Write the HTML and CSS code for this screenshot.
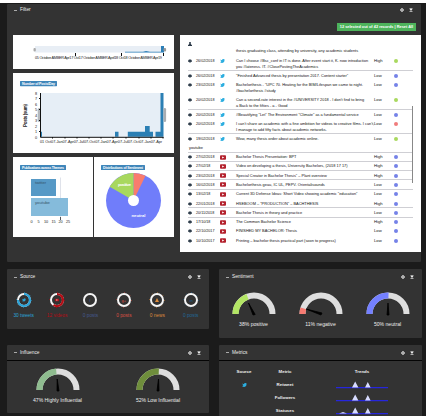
FILE: index.html
```
<!DOCTYPE html>
<html lang="en">
<head>
  <meta charset="UTF-8" />
  <title>Dashboard</title>
  <link rel="stylesheet" href="styles.css">
</head>
<body>
  <svg class="defs" width="0" height="0">
    <symbol id="user" viewBox="0 0 10 8"><path d="M2 0h6v2l2 1v3H7v2H3V6H0V3l2-1z"/></symbol>
    <symbol id="person" viewBox="0 0 10 10"><path d="M3 0h4v5l3 3v2H0V8l3-3z"/></symbol>
    <symbol id="twitter" viewBox="0 0 12 10"><path d="M0 1l5 2c0-4 4-4 5-2h2l-1 2c0 8-8 8-11 5l3-1-2-2 1-1z"/></symbol>
    <symbol id="youtube" viewBox="0 0 14 10"><rect width="14" height="10" rx="2"/><path fill="#fff" d="M5 2.5v5L10 5z"/></symbol>
    <symbol id="gear" viewBox="0 0 10 10"><circle cx="5" cy="5" r="3" fill="none" stroke="currentColor" stroke-width="2.5"/><path stroke="currentColor" stroke-width="1.5" d="M5 0v2M5 8v2M0 5h2M8 5h2"/></symbol>
    <symbol id="close" viewBox="0 0 10 10"><path stroke="currentColor" stroke-width="3" d="M2 1l6 8M8 1L2 9"/></symbol>
  </svg>

  <main class="page">
    <section class="panel filter">
      <header class="panel-head"><h2><i></i>Filter</h2><span class="tools"><svg><use href="#gear"/></svg><svg><use href="#close"/></svg></span></header>
      <div class="status"><span>12 selected out of 42 records | Reset All</span></div>
      <div class="filter-body">
        <div class="charts">
          <div class="card range">
            <svg viewBox="13 35 161 34">
              <rect x="35" y="46" width="128" height="6.5" fill="#e8eef5"/>
              <path fill="#2b7fb8" d="M125 52.5v-.7h18l3-.8 4 .8h11V46h3v6.5z"/>
              <rect x="33.5" y="48" width="2.3" height="3.5" rx="1" fill="#aaa"/>
              <rect x="163.5" y="48" width="2.6" height="3.5" rx="1" fill="#999"/>
              <path stroke="#111" d="M75.5 53v3M121.5 53v3M163.5 53v3"/>
              <text x="35" y="59.2" textLength="127">05 October AMBER Apr17 Oct17 October AMBER April18 Oct18 October AMBER Apr19</text>
            </svg>
          </div>
          <div class="card histogram">
            <svg viewBox="13 73 161 80">
              <rect x="20" y="81" width="37" height="5.2" rx=".6" fill="#3f86ba"/>
              <text class="badge" x="22" y="85.2" textLength="33">Number of Posts/Day</text>
              <rect x="40.5" y="93" width="122" height="44" fill="#e6eef6"/>
              <path fill="#2b7fb4" d="M40 131.8h2v5h-2zM115 131.8h3.5v5H115zM127.8 131.8H145V126h4.7v5.8h3.3v5h-25.2zM155.5 131.8h5V93h3v43.8h-8z"/>
              <rect x="37.7" y="108" width="3" height="14" rx="1.5" fill="#b5b8bc"/>
              <rect x="163.5" y="108" width="2.6" height="14" rx="1.3" fill="#aaadb1"/>
              <path fill="none" stroke="#111" d="M40.5 93v44.3H163.5M52.5 137v1.5M65 137v1.5M77 137v1.5M89 137v1.5M101 137v1.5M113 137v1.5M126 137v1.5M139 137v1.5M151 137v1.5M163 137v1.5M39 98.5h1.5M39 109.5h1.5M39 120.5h1.5M39 131.5h1.5"/>
              <text x="35" y="94.6">8</text><text x="35" y="100">7</text><text x="35" y="105.6">6</text><text x="35" y="111">5</text><text x="35" y="116.6">4</text><text x="35" y="122">3</text><text x="35" y="127.6">2</text><text x="35" y="133">1</text><text x="35" y="138.5">0</text>
              <text class="ylabel" transform="translate(26.5 127) rotate(-90)" textLength="23">Posts (sum)</text>
              <text x="40" y="142.8" textLength="122">01 Oct07-Jan07-Apr07-Jul07-Oct07-Jan07-Apr07-Jul07-Oct07-Jan07-Apr</text>
            </svg>
          </div>
          <div class="pair">
            <div class="card">
              <svg viewBox="13 157 80 80">
                <rect x="20" y="165" width="46" height="5" rx=".6" fill="#3f86ba"/>
                <text class="badge" x="22" y="169" textLength="42">Publications across Themes</text>
                <path stroke="#dfe2ea" d="M60.5 177.5v40"/>
                <rect x="31" y="179" width="25" height="17" fill="#5699c6"/>
                <rect x="31" y="198" width="37" height="18" fill="#85bbdb"/>
                <text class="bar-label" x="35" y="184">twitter</text>
                <text class="bar-label" x="35" y="203.5">youtube</text>
                <path stroke="#111" stroke-width=".7" d="M60.5 217v3"/>
                <g text-anchor="middle"><text x="31.5" y="223">0</text><text x="38.5" y="223">5</text><text x="46" y="223">10</text><text x="53.5" y="223">15</text><text x="60.5" y="223">20</text><text x="68" y="223">25</text></g>
              </svg>
            </div>
            <div class="card">
              <svg viewBox="94 157 80 80">
                <rect x="101" y="165" width="44" height="5" rx=".6" fill="#3f86ba"/>
                <text class="badge" x="103" y="169" textLength="40">Distributions of Sentiment</text>
                <circle cx="133.5" cy="200.5" r="27.5" fill="#707dfa"/>
                <path fill="#f97c6e" d="M133.5 200.5V173a27.5 27.5 0 0 1 12 2.75z"/>
                <path fill="#a8d85e" d="M133.5 200.5L109.7 186.7A27.5 27.5 0 0 1 133.5 173z"/>
                <circle cx="133.5" cy="200.5" r="5.5" fill="#fff"/>
                <text class="slice" x="118" y="186.3" textLength="13">positive</text>
                <text class="slice" x="131.5" y="217">neutral</text>
              </svg>
            </div>
          </div>
        </div>

        <div class="records">
          <svg class="icon"><use href="#person"/></svg>
          <div class="lead">thesis graduating class, attending by university, any academic students</div>
          <div class="row tall line"><svg class="icon"><use href="#user"/></svg><time>26/02/2018</time><svg class="tw"><use href="#twitter"/></svg><p>Can I choose #Bsc_conf in IT is done. After event start it, K. now introduction<br>you #lateness. IT. #ClosePostingTheAcademics</p><b>High</b><em class="pos"></em></div>
          <div class="row"><svg class="icon"><use href="#user"/></svg><time>26/02/2018</time><svg class="tw"><use href="#twitter"/></svg><p>"Finished Advanced thesis by presentation 2017. Content starter"</p><b>Low</b><em></em></div>
          <div class="row tall"><svg class="icon"><use href="#user"/></svg><time>23/02/2018</time><svg class="tw"><use href="#twitter"/></svg><p>Bachelorthesis - "UPC 70. Heating for the BIM/Lifespan we came to night.<br>#bachelorthesis  #study</p><b>Low</b><em></em></div>
          <div class="row tall line"><svg class="icon"><use href="#user"/></svg><time>20/02/2018</time><svg class="tw"><use href="#twitter"/></svg><p>Can a second-rate interest in the #UNIVERSITY 2018 - I don't find to bring<br>a Back to the fifties - a - Good</p><b>Low</b><em class="pos"></em></div>
          <div class="row"><svg class="icon"><use href="#user"/></svg><time>20/02/2018</time><svg class="tw"><use href="#twitter"/></svg><p>#Beautifying "Let" The Environment "Climate" as a fundamental service</p><b>Low</b><em></em></div>
          <div class="row tall line"><svg class="icon"><use href="#user"/></svg><time>20/02/2018</time><svg class="tw"><use href="#twitter"/></svg><p>I can't share an academic with a fine ambition for videos to creative films. I can't,<br>I manage to add fifty facts about academic networks.</p><b>Low</b><em class="neg"></em></div>
          <div class="row"><svg class="icon"><use href="#user"/></svg><time>19/02/2018</time><svg class="tw"><use href="#twitter"/></svg><p>Wow, many thesis order about academic online.</p><b>Low</b><em class="pos"></em></div>
          <div class="group">youtube</div>
          <div class="row line"><svg class="icon"><use href="#user"/></svg><time>27/02/2018</time><svg class="yt"><use href="#youtube"/></svg><p>Bachelor Thesis Presentation: BPT</p><b>High</b><em></em></div>
          <div class="row line"><svg class="icon"><use href="#user"/></svg><time>27/02/18</time><svg class="yt"><use href="#youtube"/></svg><p>Video on developing a thesis, University Bachelors, (2018 17 17)</p><b>High</b><em></em></div>
          <div class="row line"><svg class="icon"><use href="#user"/></svg><time>23/02/2018</time><svg class="yt"><use href="#youtube"/></svg><p>Special Creator in Bachelor Thesis" – Plant overview</p><b>High</b><em></em></div>
          <div class="row line"><svg class="icon"><use href="#user"/></svg><time>16/02/2018</time><svg class="yt"><use href="#youtube"/></svg><p>Bachelorthesis geau, IC UL, PEPV. Orientalisounds</p><b>Low</b><em></em></div>
          <div class="row"><svg class="icon"><use href="#user"/></svg><time>13/02/18</time><svg class="yt"><use href="#youtube"/></svg><p>Current 3D Defense Ideas: Short Video showing academic "education"</p><b>Low</b><em></em></div>
          <div class="row line"><svg class="icon"><use href="#user"/></svg><time>22/01/2018</time><svg class="yt"><use href="#youtube"/></svg><p>HSEBOOM – "PRODUCTION" – BACHTHESIS</p><b>High</b><em></em></div>
          <div class="row line"><svg class="icon"><use href="#user"/></svg><time>20/11/2018</time><svg class="yt"><use href="#youtube"/></svg><p>Bachelor Thesis in theory and practice</p><b>Low</b><em></em></div>
          <div class="row"><svg class="icon"><use href="#user"/></svg><time>17/10/18</time><svg class="yt"><use href="#youtube"/></svg><p>The Common Bachelor Science</p><b>High</b><em></em></div>
          <div class="row"><svg class="icon"><use href="#user"/></svg><time>22/10/2017</time><svg class="yt"><use href="#youtube"/></svg><p>FINISHED MY BACHELOR: Thesis</p><b>Low</b><em></em></div>
          <div class="row"><svg class="icon"><use href="#user"/></svg><time>10/10/2017</time><svg class="yt"><use href="#youtube"/></svg><p>Printing – bachelor thesis practical part (soon to progress)</p><b>Low</b><em></em></div>
          <span class="scrollbar"></span>
        </div>
      </div>
    </section>

    <section class="panel sources">
      <header class="panel-head"><h2><i></i>Source</h2><span class="tools"><svg><use href="#gear"/></svg><svg><use href="#close"/></svg></span></header>
      <div class="rings">
        <div class="ring tweets"><svg viewBox="-8 -8 16 16"><circle class="track" r="6"/><path class="arc" d="M0-6A6 6 0 1 1-6 0"/><circle class="ticks" r="7.5"/><use href="#twitter" x="-2" y="-1.7" width="4" height="3.4"/></svg>30 tweets</div>
        <div class="ring videos"><svg viewBox="-8 -8 16 16"><circle class="track" r="6"/><path class="arc" d="M0-6A6 6 0 1 1-3.5 4.9"/><circle class="ticks" r="7.5"/><use href="#youtube" x="-2" y="-1.5" width="4" height="3"/></svg>12 videos</div>
        <div class="ring facebook"><svg viewBox="-8 -8 16 16"><circle class="track" r="6"/><text x="-.8" y="1.5">f</text></svg>0 posts</div>
        <div class="ring google"><svg viewBox="-8 -8 16 16"><circle class="track" r="6"/><circle class="ticks" r="7.5"/><text x="-2.5" y="1.5">g+</text></svg>0 posts</div>
        <div class="ring rss"><svg viewBox="-8 -8 16 16"><circle class="track" r="6"/><circle class="ticks" r="7.5"/><path d="M-2 2l2-4 2 4z"/></svg>0 news</div>
        <div class="ring linkedin"><svg viewBox="-8 -8 16 16"><circle class="track" r="6"/><circle class="ticks" r="7.5"/><text x="-1.5" y="1.5">in</text></svg>0 posts</div>
      </div>
    </section>

    <section class="panel sentiments">
      <header class="panel-head"><h2><i></i>Sentiment</h2><span class="tools"><svg><use href="#gear"/></svg><svg><use href="#close"/></svg></span></header>
      <div class="gauges three">
        <div class="gauge"><svg viewBox="-22 -22 44 24"><path class="rest" d="M-18.5 0A18.5 18.5 0 0 1 18.5 0"/><path stroke="#b3e565" d="M-18.5 0A18.5 18.5 0 0 1-6.5-17.3"/><path class="needle" d="M-1 1L-5.5-11 1.2 .5z"/></svg>38% positive</div>
        <div class="gauge"><svg viewBox="-22 -22 44 24"><path class="rest" d="M-18.5 0A18.5 18.5 0 0 1 18.5 0"/><path stroke="#f77b72" d="M-18.5 0A18.5 18.5 0 0 1-17.6-5.7"/><path class="needle" d="M0 1L-15-5 1-1z"/></svg>11% negative</div>
        <div class="gauge"><svg viewBox="-22 -22 44 24"><path class="rest" d="M-18.5 0A18.5 18.5 0 0 1 18.5 0"/><path stroke="#7480ff" d="M-18.5 0A18.5 18.5 0 0 1 .5-18.5"/><path class="needle" d="M-1 1L0-11 1 1z"/></svg>50% neutral</div>
      </div>
    </section>

    <section class="panel influence">
      <header class="panel-head ruled"><h2><i></i>Influence</h2><span class="tools"><svg><use href="#gear"/></svg><svg><use href="#close"/></svg></span></header>
      <div class="gauges two">
        <div class="gauge"><svg viewBox="-22 -22 44 24"><path class="rest" d="M-18.5 0A18.5 18.5 0 0 1 18.5 0"/><path stroke="#8fbc8f" d="M-18.5 0A18.5 18.5 0 0 1-1.7-18.4"/><path class="needle" d="M-1 1L-.8-11 1 1z"/></svg>47% Highly Influential</div>
        <div class="gauge"><svg viewBox="-22 -22 44 24"><path class="rest" d="M-18.5 0A18.5 18.5 0 0 1 18.5 0"/><path stroke="#6f8e3c" d="M-18.5 0A18.5 18.5 0 0 1 .8-18.5"/><path class="needle" d="M-1 1L.5-11 1 1z"/></svg>52% Low Influential</div>
      </div>
    </section>

    <section class="panel metrics">
      <header class="panel-head ruled"><h2><i></i>Metrics</h2><span class="tools"><svg><use href="#gear"/></svg><svg><use href="#close"/></svg></span></header>
      <div class="metric-grid">
        <span>Source</span><span>Metric</span><span>Trends</span>
        <svg class="tw"><use href="#twitter"/></svg><span>Retweet</span>
        <svg class="spark" viewBox="0 0 52 9"><path class="base" d="M0 7h52v1.2H0z"/><path class="peak" d="M16 7.5l3.2-6 3.2 6zM29 7.5l2.8-5.5 2.8 5.5z"/></svg>
        <span></span><span>Followers</span>
        <svg class="spark" viewBox="0 0 52 9"><path class="base" d="M0 7h52v1.2H0z"/><path class="peak" d="M16 7.5l3.2-6 3.2 6zM29 7.5l2.8-5.5 2.8 5.5z"/></svg>
        <span></span><span>Statuses</span>
        <svg class="spark" viewBox="0 0 52 9"><path class="base" d="M0 7h52v1.2H0z"/><path class="peak" d="M3 7.5l4-1.5 4 1.5zM16 7.5l3.2-6 3.2 6zM29 7.5l2.8-5.5 2.8 5.5z"/></svg>
      </div>
    </section>
  </main>
</body>
</html>
```
FILE: styles.css
```
:root {
  --page: #1b1b1b;
  --panel: #333;
  --twitter: #2caee0;
}

* {
  box-sizing: border-box;
  margin: 0;
  padding: 0;
}

body {
  width: 427px;
  height: 416px;
  overflow: hidden;
  background: #fff;
  font: 5px/6px "Liberation Sans", Arial, sans-serif;
}

svg {
  display: block;
}

.defs {
  float: left;
}

.page {
  display: grid;
  grid-template-columns: 202px 203px;
  grid-template-rows: 258px 69px 80px;
  column-gap: 10px;
  row-gap: 7px;
  width: 426px;
  height: 413px;
  margin-top: 3px;
  padding: 1px 4px 0 7px;
  overflow: hidden;
  background: var(--page);
}

.panel {
  background: var(--panel);
  color: #eee;
  overflow: hidden;
  border-radius: 1px;
}

.filter {
  grid-column: 1 / 3;
  width: 414px;
}

.sources {
  height: 60px;
}

.influence {
  height: 68px;
}

.panel-head {
  display: flex;
  justify-content: space-between;
  align-items: center;
  height: 16px;
  padding: 0 8px 0 7px;
}

.filter .panel-head {
  height: 12px;
}

.ruled {
  border-bottom: 1px solid #050505;
}

.panel-head h2 {
  display: flex;
  align-items: center;
  gap: 3px;
  font-size: 4.8px;
  line-height: 6px;
  font-weight: normal;
}

.panel-head i {
  width: 3px;
  height: 1px;
  background: #aaa;
}

.tools {
  display: flex;
  gap: 5px;
  color: #eee;
}

.tools svg {
  width: 4px;
  height: 4px;
}

.status {
  display: flex;
  justify-content: flex-end;
  height: 19px;
  padding: 7px 5px 0 0;
}

.status span {
  width: 79px;
  height: 8px;
  background: #4db35b;
  color: #fff;
  font-size: 3.9px;
  line-height: 8px;
  font-weight: bold;
  text-align: center;
  white-space: nowrap;
}

.filter-body {
  display: flex;
  gap: 6px;
  padding-left: 6px;
}

.charts {
  display: flex;
  flex-direction: column;
  gap: 4px;
  width: 161px;
}

.card {
  background: #fff;
}

.card svg {
  width: 100%;
  height: 100%;
}

.range {
  height: 34px;
}

.histogram {
  height: 80px;
}

.pair {
  display: flex;
  gap: 1px;
}

.pair .card {
  width: 80px;
  height: 80px;
}

.card text {
  font-size: 3.8px;
  fill: #222;
}

.card .badge {
  font-size: 3.6px;
  font-weight: bold;
  fill: #fff;
}

.card .ylabel {
  font-size: 4.5px;
  font-weight: bold;
}

.card .bar-label {
  fill: #35536a;
  font-size: 4.2px;
}

.card .slice {
  font-size: 4.2px;
  font-weight: bold;
  fill: #fff;
}

.records {
  position: relative;
  width: 241px;
  height: 217px;
  padding: 7px 8px 0;
  background: #fff;
  color: #111;
  font-size: 3.9px;
  overflow: hidden;
}

.icon {
  width: 4px;
  height: 4px;
  fill: #2c3a48;
}

.lead {
  height: 10.5px;
  padding: 2px 0 0 48px;
  white-space: nowrap;
}

.row {
  display: grid;
  grid-template-columns: 8px 24px 16px 138px 20px 6px;
  height: 9.3px;
  padding-top: 1.5px;
  white-space: nowrap;
}

.tall {
  height: 14.8px;
}

.line {
  border-bottom: 1px solid #cfcfd4;
}

.row .icon {
  margin-top: 1px;
}

.row time {
  font-size: 3.7px;
}

.row b {
  font-size: 4.2px;
  font-weight: normal;
}

.row em {
  width: 4px;
  height: 4px;
  margin-top: 1px;
  border-radius: 2px;
  background: #7582e8;
}

.row .pos {
  background: #a9d95f;
}

.row .neg {
  background: #f07c7c;
}

.tw {
  width: 5px;
  height: 4px;
  margin-top: 1px;
  fill: var(--twitter);
}

.yt {
  width: 6px;
  height: 5px;
  margin-top: .5px;
  fill: #b3202c;
}

.group {
  height: 9px;
  padding: 1.5px 0 0 1px;
  border-bottom: 1px solid #cfcfd4;
}

.scrollbar {
  position: absolute;
  top: 71px;
  right: 8px;
  width: 1px;
  height: 77px;
  background: #888;
}

.rings {
  display: grid;
  grid-template-columns: repeat(6, 33.4px);
  padding-top: 7px;
}

.ring {
  display: flex;
  flex-direction: column;
  align-items: center;
  gap: 5px;
  font-size: 4.8px;
  line-height: 6px;
  white-space: nowrap;
  color: var(--c);
}

.ring svg {
  width: 16px;
  height: 16px;
  fill: var(--c);
}

.ring text {
  font-size: 4px;
}

.track {
  fill: none;
  stroke: #f5f5f5;
  stroke-width: 2;
}

.arc {
  fill: none;
  stroke: var(--c);
  stroke-width: 2.2;
}

.ticks {
  fill: none;
  stroke: var(--c);
  stroke-width: .8;
  stroke-dasharray: .8 5.1;
}

.tweets { --c: #2ba3d8; }
.videos { --c: #b40c14; }
.facebook { --c: #45598f; }
.google { --c: #d95043; }
.rss { --c: #dc8b3d; }
.linkedin { --c: #22699a; }

.gauges {
  display: grid;
  padding-top: 7px;
}

.three {
  grid-template-columns: repeat(3, 67px);
  padding-left: 1px;
}

.two {
  grid-template-columns: 101px 100px;
}

.gauge {
  display: flex;
  flex-direction: column;
  align-items: center;
  gap: 5px;
  font-size: 5.1px;
  line-height: 6px;
  white-space: nowrap;
}

.gauge svg {
  width: 44px;
  height: 24px;
}

.gauge path {
  fill: none;
  stroke-width: 6;
}

.gauge .rest {
  stroke: #dedede;
}

.gauge .needle {
  fill: #000;
  stroke: #000;
  stroke-width: .8;
}

.metric-grid {
  display: grid;
  grid-template-columns: 50px 32px 122px;
  grid-template-rows: 13px 13px 13px 13px;
  align-items: center;
  justify-items: center;
  padding-top: 4px;
  font-size: 4.4px;
  font-weight: bold;
}

.spark {
  width: 52px;
  height: 9px;
}

.base {
  fill: #2626dc;
}

.peak {
  fill: #d8dcff;
}
```
